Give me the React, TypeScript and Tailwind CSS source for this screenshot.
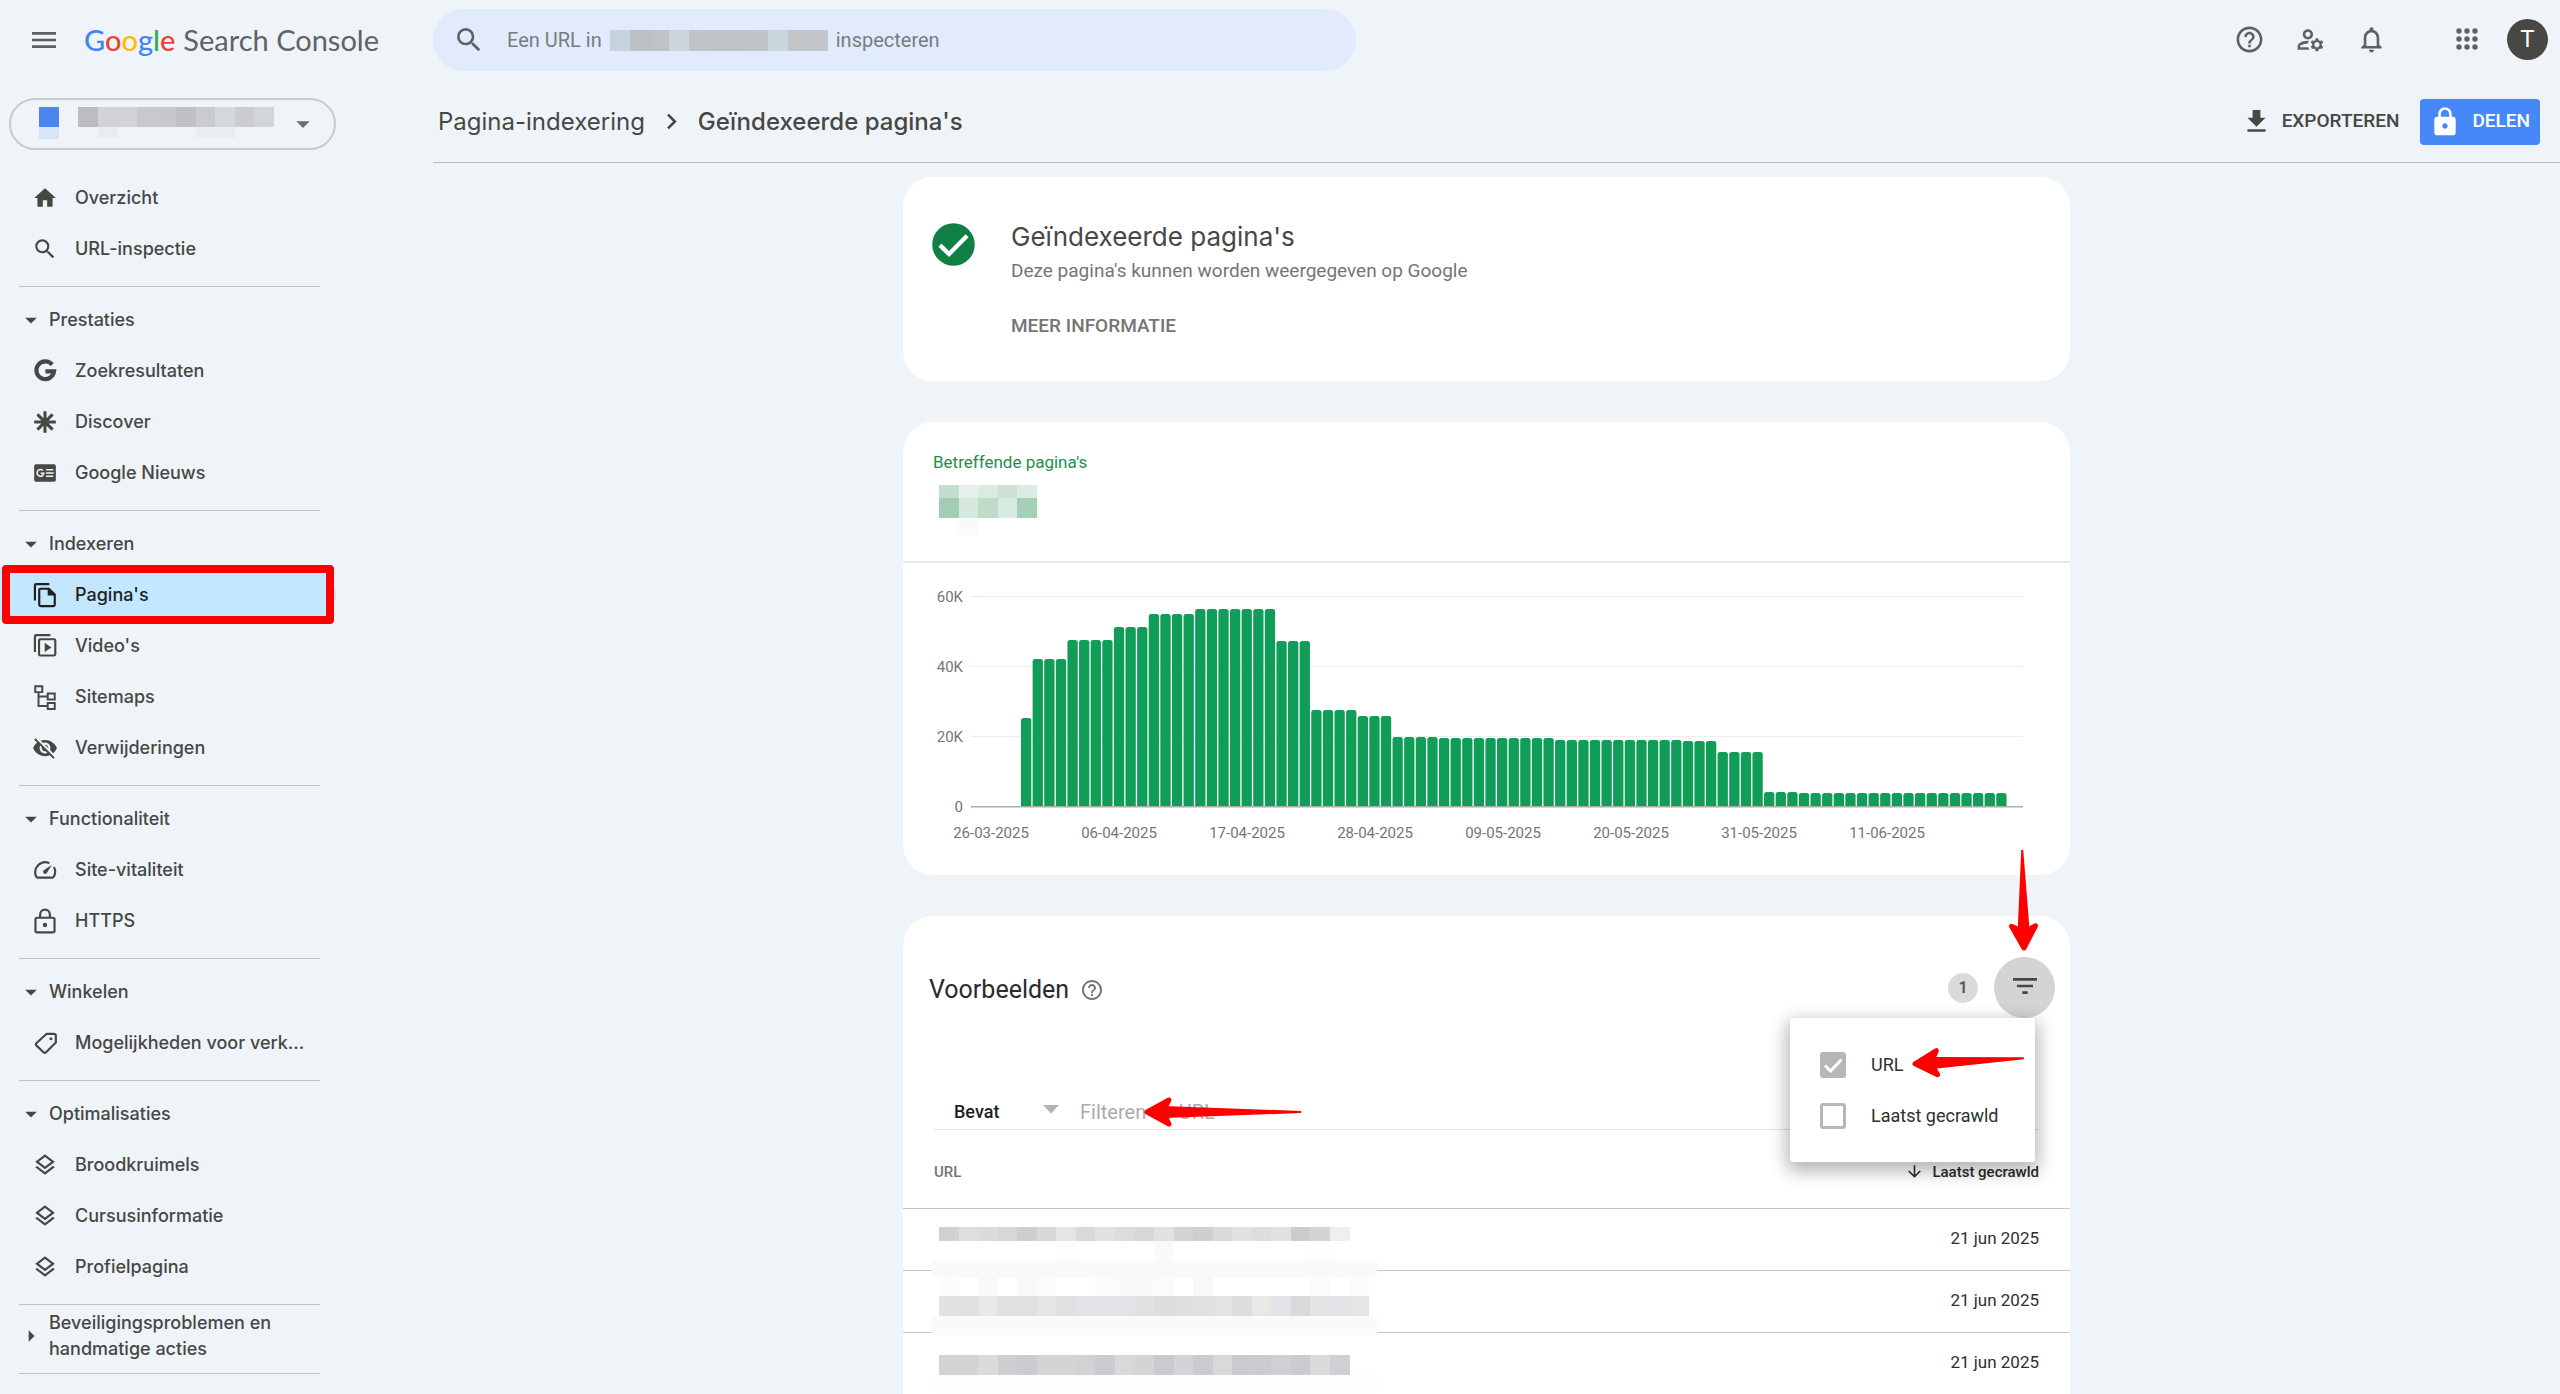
import React from "react";
import type { ReactNode } from "react";
import {
  MdArrowDownward,
  MdArrowDropDown,
  MdArrowRight,
  MdChevronRight,
  MdFileDownload,
  MdFilterList,
  MdHelpOutline,
  MdHome,
  MdLock,
  MdMenu,
  MdNotificationsNone,
  MdOutlineLayers,
  MdOutlineManageAccounts,
  MdSearch,
  MdVisibilityOff,
} from "react-icons/md";

/* ---------- icons ---------- */

function Glyph({ children }: { children: ReactNode }) {
  return (
    <svg viewBox="0 0 24 24" className="size-[26px]" fill="none" stroke="currentColor" strokeWidth={2} aria-hidden="true">
      {children}
    </svg>
  );
}

const GIcon = () => (
  <Glyph>
    <path d="M18.6 6.1A8.2 8.2 0 1 0 20.4 12.3H12.4" strokeWidth={3.8} />
  </Glyph>
);
const DiscoverIcon = () => (
  <Glyph>
    <path d="M12 2v20M2 12h20M5 5l14 14M19 5L5 19" strokeWidth={2.8} />
  </Glyph>
);
const NewsIcon = () => (
  <Glyph>
    <rect x="2" y="4" width="20" height="16" rx="1.6" fill="currentColor" stroke="none" />
    <path d="M10 9.7A3.1 3.1 0 1 0 10.9 12.2H8" stroke="#eff4f9" strokeWidth={1.5} />
    <path d="M13 9h6.6M13 12h7M13 15h6.6" stroke="#eff4f9" strokeWidth={1.5} />
  </Glyph>
);
const PagesIcon = () => (
  <Glyph>
    <path d="M2.7 17V3.2Q2.7 2 3.9 2H16" />
    <path d="M8 6.2h7.6l5.4 5.4V21q0 1.3-1.3 1.3H8Q6.7 22.3 6.7 21V7.5Q6.7 6.2 8 6.2Z" />
    <path d="M14.5 6v6.5H21.5Z" fill="currentColor" stroke="none" />
  </Glyph>
);
const VideosIcon = () => (
  <Glyph>
    <path d="M2.7 17.5V3.2Q2.7 2 3.9 2H17" />
    <rect x="6.5" y="5.8" width="15" height="15" rx="1.3" />
    <path d="M11.7 9v8.6L18 13.3Z" fill="currentColor" stroke="none" />
  </Glyph>
);
const SitemapIcon = () => (
  <Glyph>
    <path d="M3 2h6.5v5.5H3zM14.5 8.8H21v5.5h-6.500zM14.5 17.500H21V23h-6.500zM6 7.500v12.800h8.500M6 11.600h8.500" strokeWidth={1.8} />
  </Glyph>
);
const SpeedIcon = () => (
  <Glyph>
    <path d="M20.2 9.2A9 9 0 0 1 20 18.2Q19.600 19 18.800 19H5.200Q4.400 19 4 18.200A9.200 9.200 0 0 1 16 5.700" />
    <path d="M18.5 7.2L13.5 15A1.9 1.9 0 0 1 10.8 12.3Z" fill="currentColor" stroke="none" />
  </Glyph>
);
const LockOutlineIcon = () => (
  <Glyph>
    <rect x="3.2" y="9" width="17.6" height="13.5" rx="1.5" />
    <path d="M7.5 9V6a4.500 4.500 0 0 1 9 0v3" />
    <circle cx="12" cy="15.6" r="2" fill="currentColor" stroke="none" />
  </Glyph>
);
const TagIcon = () => (
  <Glyph>
    <path d="M13.5 3.500H20q2 0 2 2v6L12.800 20.700q-1 .9-2 0L4 14.200q-1-1 0-2Z" />
    <circle cx="17.5" cy="8" r="1.4" fill="currentColor" stroke="none" />
  </Glyph>
);
const LayersIcon = () => <MdOutlineLayers className="size-[28px]" />;

const AppsIcon = () => (
  <svg viewBox="0 0 24 24" className="size-[24px]" fill="currentColor" aria-hidden="true">
    {[4, 12, 20].map((y) => [4, 12, 20].map((x) => <circle key={`${x}-${y}`} cx={x} cy={y} r="2.7" />))}
  </svg>
);

/* Red pointer with its tip at (0,0) and its tail to the right. */
function Pointer({ length }: { length: number }) {
  return (
    <g fill="#ff0000">
      <path d="M3 0L25 -12L21 -4V4L25 12Z" stroke="#ff0000" strokeWidth={5} strokeLinejoin="round" />
      <path d={`M20 -6L${length} -1V1L20 6Z`} />
    </g>
  );
}

/* Blocks that hide private values. */
function Blocks({ x = 0, y = 0, w, h, colors }: { x?: number; y?: number; w: number; h: number; colors: string[] }) {
  return (
    <g shapeRendering="crispEdges">
      {colors.map((c, i) => (c ? <rect key={i} x={x + i * w} y={y} width={w} height={h} fill={c} /> : null))}
    </g>
  );
}

/* ---------- sidebar ---------- */

type Item = { label: string; icon: ReactNode; active?: boolean };
type Section = { title?: string; items: Item[] };

const sections: Section[] = [
  {
    items: [
      { label: "Overzicht", icon: <MdHome className="size-[26px]" /> },
      { label: "URL-inspectie", icon: <MdSearch className="size-[28px]" /> },
    ],
  },
  {
    title: "Prestaties",
    items: [
      { label: "Zoekresultaten", icon: <GIcon /> },
      { label: "Discover", icon: <DiscoverIcon /> },
      { label: "Google Nieuws", icon: <NewsIcon /> },
    ],
  },
  {
    title: "Indexeren",
    items: [
      { label: "Pagina's", icon: <PagesIcon />, active: true },
      { label: "Video's", icon: <VideosIcon /> },
      { label: "Sitemaps", icon: <SitemapIcon /> },
      { label: "Verwijderingen", icon: <MdVisibilityOff className="size-[26px]" /> },
    ],
  },
  {
    title: "Functionaliteit",
    items: [
      { label: "Site-vitaliteit", icon: <SpeedIcon /> },
      { label: "HTTPS", icon: <LockOutlineIcon /> },
    ],
  },
  { title: "Winkelen", items: [{ label: "Mogelijkheden voor verk...", icon: <TagIcon /> }] },
  {
    title: "Optimalisaties",
    items: [
      { label: "Broodkruimels", icon: <LayersIcon /> },
      { label: "Cursusinformatie", icon: <LayersIcon /> },
      { label: "Profielpagina", icon: <LayersIcon /> },
    ],
  },
];

function Logo() {
  return (
    <a href="#" className="flex items-baseline gap-2 font-[Lato,sans-serif] text-[29px] leading-9 text-[#5f6368]">
      <span className="font-medium">
        <span className="text-[#4285f4]">G</span>
        <span className="text-[#ea4335]">o</span>
        <span className="text-[#fbbc04]">o</span>
        <span className="text-[#4285f4]">g</span>
        <span className="text-[#34a853]">l</span>
        <span className="text-[#ea4335]">e</span>
      </span>
      <span>Search Console</span>
    </a>
  );
}

function Sidebar() {
  return (
    <aside className="w-[433px] shrink-0 pt-[9px] text-[#474744]">
      <div className="flex h-[62px] items-center gap-[24px] pl-[28px] text-[#5f6060]">
        <button type="button" aria-label="Menu">
          <MdMenu className="size-[32px]" />
        </button>
        <Logo />
      </div>

      <button
        type="button"
        aria-label="Property selecteren"
        className="mt-[27px] ml-[9px] flex h-[52px] w-[327px] items-center rounded-full border-2 border-[#c9cccd] pl-[20px]"
      >
        <svg width="256" height="36" aria-hidden="true">
          <Blocks x={0} y={1} w={8} h={20} colors={["#f1f5f8"]} />
          <Blocks x={8} y={1} w={20} h={20} colors={["#4a86f0"]} />
          <Blocks x={8} y={21} w={20} h={12} colors={["#d8e5f8"]} />
          <Blocks
            x={47}
            y={1}
            w={19.6}
            h={20}
            colors={["#bcbdbe", "#d1d3d4", "#d0d4d6", "#c8c9cb", "#c6c8ca", "#bfc1c3", "#c9cbcf", "#d4d9db", "#cccdd1", "#d3d6d8"]}
          />
          <Blocks x={67} y={21} w={19.6} h={11} colors={["#e9edf2", "", "", "", "", "#ebeff3", "#e9edf2"]} />
        </svg>
        <MdArrowDropDown className="size-[32px] text-[#6a6c6c]" />
      </button>

      <nav className="mt-[22px] font-[Inter,sans-serif] text-[18px] font-medium">
        {sections.map((s, i) => (
          <section key={i}>
            {s.title && (
              <button type="button" className="mt-[7px] flex h-[51px] w-full items-center pl-[17px]">
                <MdArrowDropDown className="size-[28px]" />
                <span className="ml-1">{s.title}</span>
              </button>
            )}
            <ul className="pb-3">
              {s.items.map((it) => (
                <li key={it.label} className="relative w-[336px]">
                  <a
                    href="#"
                    className={
                      it.active
                        ? "flex h-[51px] items-center rounded-r-full bg-[#c2e7ff] pl-8 text-[#1f1f1f]"
                        : "flex h-[51px] items-center pl-8"
                    }
                  >
                    <span className="flex w-[26px] shrink-0 justify-center">{it.icon}</span>
                    <span className="ml-[17px] whitespace-nowrap">{it.label}</span>
                  </a>
                  {it.active && (
                    <span className="pointer-events-none absolute -top-1 -bottom-1 left-0.5 right-0.5 rounded-[4px] border-8 border-[#ff0000]" />
                  )}
                </li>
              ))}
            </ul>
            <hr className="ml-[19px] w-[301px] border-[#c0c3c5]" />
          </section>
        ))}
        <button type="button" className="flex items-center pt-[5px] pb-[11px] pl-[17px] text-left leading-[26px]">
          <MdArrowRight className="size-[28px]" />
          <span className="ml-1 w-[240px]">Beveiligingsproblemen en handmatige acties</span>
        </button>
        <hr className="ml-[19px] w-[301px] border-[#c0c3c5]" />
      </nav>
    </aside>
  );
}

/* ---------- top bars ---------- */

function TopBar() {
  return (
    <header className="flex items-start justify-between pt-[9px] pr-0.5">
      <label className="relative flex h-[62px] max-w-[923px] flex-1 items-center rounded-full bg-[#e1ebfd] pl-[20px] text-[20px] text-[#7a7c7c]">
        <MdSearch className="size-[32px] text-[#5f6060]" />
        <span className="ml-[22px]">Een URL in</span>
        <svg width="218" height="21" className="mx-2" aria-hidden="true">
          <Blocks
            w={19.8}
            h={21}
            colors={["#c6d2dc", "#bdc0c3", "#bfc3c6", "#cad5de", "#c0c4c8", "#bfc3c5", "#bfc3c6", "#c1c4c7", "#cad6dd", "#c2c5c8", "#c3c6c8"]}
          />
        </svg>
        <span>inspecteren</span>
        <input type="text" aria-label="URL inspecteren" className="absolute inset-0 rounded-full bg-transparent pl-[74px] outline-none" />
      </label>
      <div className="flex h-[60px] items-center text-[#5f6060]">
        <button type="button" aria-label="Help" className="flex w-[61px] justify-center">
          <MdHelpOutline className="size-[31px]" />
        </button>
        <button type="button" aria-label="Gebruikersinstellingen" className="flex w-[61px] justify-center">
          <MdOutlineManageAccounts className="size-[31px]" />
        </button>
        <button type="button" aria-label="Meldingen" className="flex w-[61px] justify-center">
          <MdNotificationsNone className="size-[31px]" />
        </button>
        <button type="button" aria-label="Google-apps" className="ml-[34px] flex w-[61px] justify-center">
          <AppsIcon />
        </button>
        <button type="button" aria-label="Account" className="flex w-[61px] justify-center">
          <span className="flex size-[41px] items-center justify-center rounded-full bg-[#474744] text-[24px] text-white">T</span>
        </button>
      </div>
    </header>
  );
}

function TitleBar() {
  return (
    <div className="flex h-[92px] items-center justify-between border-b border-[#b9bcbe] pt-2.5 pr-5 pl-[5px]">
      <nav className="flex items-center font-[Inter,sans-serif] text-[24px] text-[#474744]">
        <a href="#">Pagina-indexering</a>
        <MdChevronRight className="mx-[11px] size-[31px]" />
        <span className="font-medium">Geïndexeerde pagina's</span>
      </nav>
      <div className="flex items-center gap-[21px] text-[19px] font-medium">
        <button type="button" className="flex items-center gap-[10px] text-[#474744]">
          <MdFileDownload className="size-[31px]" />
          EXPORTEREN
        </button>
        <button type="button" className="flex h-[46px] items-center gap-[11px] rounded-[4px] bg-[#4688f7] pr-[10px] pl-[9px] text-white">
          <MdLock className="size-[32px]" />
          DELEN
        </button>
      </div>
    </div>
  );
}

/* ---------- cards ---------- */

function StatusCard() {
  return (
    <section className="flex gap-8 rounded-[30px] bg-white pt-[42px] pb-[41px] pl-[25px]">
      <svg viewBox="0 0 24 24" className="size-[51px] shrink-0" aria-hidden="true">
        <circle cx="12" cy="12" r="10" fill="#118044" />
        <path d="M5.6 12.3l4.300 4.200 8.500-8.600" fill="none" stroke="#fff" strokeWidth={2} />
      </svg>
      <div>
        <h1 className="font-[Inter,sans-serif] text-[26px] leading-[36px] text-[#474744]">Geïndexeerde pagina's</h1>
        <p className="mt-0.5 text-[19px] leading-7 text-[#757575]">Deze pagina's kunnen worden weergegeven op Google</p>
        <a href="#" className="mt-[27px] block text-[19px] leading-7 font-medium text-[#757575]">
          MEER INFORMATIE
        </a>
      </div>
    </section>
  );
}

/* Bar heights in pixels, as runs of [number of days, height]. */
const runs: [number, number][] = [
  [1, 88], [3, 147], [4, 166], [3, 179], [4, 192], [7, 197], [3, 165], [4, 96], [3, 90],
  [4, 69], [10, 68], [11, 66], [3, 65], [4, 54], [3, 14], [18, 13],
];
const bars = runs.flatMap(([n, h]) => Array.from({ length: n }, () => h));
const days = ["26-03-2025", "06-04-2025", "17-04-2025", "28-04-2025", "09-05-2025", "20-05-2025", "31-05-2025", "11-06-2025"];

function ChartCard() {
  return (
    <section className="rounded-[30px] bg-white">
      <div className="h-[141px] border-b-2 border-[#e6e9e9] pt-[28px] pl-[30px]">
        <h2 className="text-[17px] leading-6 text-[#1e8e4e]">Betreffende pagina's</h2>
        <svg width="110" height="50" className="mt-[11px] ml-[6px]" aria-hidden="true">
          <Blocks w={19.6} h={13} colors={["#c3dece", "#e8f0ec", "#dbebe1", "#cbe2d5", "#dcece3"]} />
          <Blocks y={13} w={19.6} h={20} colors={["#a2ccb3", "#d5e9dc", "#bfdccb", "#d8ebe0", "#a6cfb8"]} />
          <Blocks y={33} w={19.6} h={17} colors={["", "#fafafa"]} />
        </svg>
      </div>
      <svg viewBox="0 0 1167 312" className="block w-full" role="img" aria-label="Betreffende pagina's per dag">
        {[
          [33, "60K"],
          [103, "40K"],
          [173, "20K"],
          [243, "0"],
        ].map(([y, t]) => (
          <g key={t}>
            <rect x="68" y={y} width="1052" height={t === "0" ? 1.5 : 1} fill={t === "0" ? "#a9acac" : "#eceeee"} />
            <text x="60" y={Number(y) + 6} textAnchor="end" fontSize="15" fill="#757575">
              {t}
            </text>
          </g>
        ))}
        {bars.map((h, i) => {
          const x = 118 + i * 11.61;
          return (
            <path
              key={i}
              d={`M${x} 243V${245.5 - h}q0 -2.5 2.5 -2.5h5.3q2.5 0 2.5 2.5V243Z`}
              fill="#0f9d58"
            />
          );
        })}
        {days.map((d, i) => (
          <text key={d} x={88 + i * 128} y="275" textAnchor="middle" fontSize="15" fill="#757575">
            {d}
          </text>
        ))}
      </svg>
    </section>
  );
}

function FilterOption({ label, checked }: { label: string; checked: boolean }) {
  return (
    <label className="flex h-[51px] items-center gap-[25px] pl-[30px] text-[18px] text-[#2e3030]">
      <span className="relative size-[26px]">
        <input
          type="checkbox"
          defaultChecked={checked}
          className="block size-[26px] appearance-none rounded-[3px] border-[3px] border-[#b4b6b8] checked:bg-[#b4b6b8]"
        />
        {checked && (
          <svg viewBox="0 0 26 26" className="pointer-events-none absolute inset-0" aria-hidden="true">
            <path d="M5 13.5l5.500 5.500L21.500 7.500" fill="none" stroke="#fff" strokeWidth={3} />
          </svg>
        )}
      </span>
      {label}
    </label>
  );
}

function Redactions() {
  return (
    <svg width="446" height="168" className="absolute top-[97px] left-[29px]" aria-hidden="true">
      <Blocks x={0} y={34} w={445} h={16} colors={["#f8f9f9"]} />
      <Blocks x={0} y={50} w={445} h={19} colors={["#ffffff"]} />
      <Blocks x={0} y={89} w={445} h={19} colors={["#f9fafa"]} />
      <Blocks x={0} y={148} w={445} h={18} colors={["#fdfdfd"]} />
      <Blocks
        x={7}
        y={0}
        w={19.55}
        h={14}
        colors={[
          "#d0d1d4", "#dcdfdd", "#dadcda", "#d6d8d6", "#cdced2", "#d7d9d7", "#e4e5e8", "#d8dad8", "#e0e1e3", "#dbdddb", "#d6d7d8",
          "#e0e2e1", "#d2d3d5", "#cecfd2", "#d9dad9", "#e0e2e1", "#dcdedc", "#e0e1e4", "#cbccd0", "#d3d4d6", "#eeeff2",
        ]}
      />
      <Blocks
        x={7}
        y={14}
        w={19.55}
        h={20}
        colors={["", "", "", "", "", "", "#fdfdfd", "", "", "", "", "#f9fafa", "", "", "", "", "", "", "", "#fdfdfd"]}
      />
      <Blocks
        x={7}
        y={50}
        w={19.55}
        h={19}
        colors={[
          "#fcfcfc", "", "#f9f9f9", "", "#f9f9f9", "#fcfcfc", "", "", "#fcfcfc", "#fafafa", "#fafafa", "#fbfbfb", "", "#f7f8f8", "",
          "", "", "", "", "#fcfcfc", "", "#fcfcfc",
        ]}
      />
      <Blocks
        x={7}
        y={69}
        w={19.55}
        h={20}
        colors={[
          "#e1e2e4", "#e0e1e2", "#e8eae8", "#e0e1e2", "#dfe0e1", "#e5e6e7", "#e0e1e3", "#e2e3e6", "#e2e3e6", "#e2e3e6", "#dfe0e2",
          "#dcdedd", "#dddfde", "#e0e1e3", "#e2e3e5", "#dcdddd", "#e7e9e7", "#e2e3e6", "#d9dbd9", "#e2e3e5", "#e2e3e6", "#e4e6e5",
        ]}
      />
      <Blocks
        x={7}
        y={128}
        w={19.55}
        h={20}
        colors={[
          "#d2d3d5", "#d2d3d4", "#dadcda", "#cecfd2", "#cbccd0", "#d3d4d6", "#d3d4d6", "#d1d2d4", "#cbccd1", "#d8dad9", "#d3d4d6",
          "#cacbd0", "#d3d4d7", "#cbccd1", "#d8dad8", "#cacbd0", "#cbccd0", "#cfd0d2", "#cbccd0", "#d9dbd9", "#cfd0d3",
        ]}
      />
    </svg>
  );
}

function ExamplesCard() {
  return (
    <section className="rounded-t-[30px] bg-white pt-[41px]">
      <div className="flex h-[61px] items-center pr-[15px] pl-[26px]">
        <div className="flex items-center pt-1">
          <h2 className="text-[25px] text-[#2a2b2b]">Voorbeelden</h2>
          <button type="button" aria-label="Uitleg" className="ml-[11px] text-[#757575]">
            <MdHelpOutline className="size-[24px]" />
          </button>
        </div>
        <span className="mr-[16px] ml-auto flex size-[30px] items-center justify-center rounded-full bg-[#d9dadb] text-[16px] font-bold text-[#5b5d5d]">
          1
        </span>
        <div className="relative z-10">
          <button type="button" aria-label="Filter" className="flex size-[61px] items-center justify-center rounded-full bg-[#d2d4d5] pb-1 text-[#474744]">
            <MdFilterList className="size-[32px]" />
          </button>
          <svg width="40" height="106" className="pointer-events-none absolute -top-[108px] left-[10px] max-w-none" aria-hidden="true">
            <g transform="translate(20 102) rotate(-91)">
              <Pointer length={101} />
            </g>
          </svg>
          <div className="absolute top-full right-5 w-[245px] rounded-[3px] bg-white py-[21px] shadow-[0_6px_18px_3px_rgba(0,0,0,0.3)]">
            <FilterOption label="URL" checked />
            <FilterOption label="Laatst gecrawld" checked={false} />
            <svg width="120" height="36" className="pointer-events-none absolute top-[26px] left-[120px]" aria-hidden="true">
              <g transform="translate(2 20) rotate(-3)">
                <Pointer length={112} />
              </g>
            </svg>
          </div>
        </div>
      </div>

      <div className="relative mr-[31px] ml-[31px] mt-[76px] flex h-[36px] items-center border-b border-[#dfe1e2] pl-5">
        <label className="relative">
          <select aria-label="Filtertype" className="w-[110px] appearance-none text-[18px] font-medium text-[#1f1f1f] outline-none">
            <option>Bevat</option>
          </select>
          <svg width="16" height="9" className="pointer-events-none absolute top-[7px] right-[5px]" aria-hidden="true">
            <path d="M0 0H16L8 8.5Z" fill="#b0b2b3" />
          </svg>
        </label>
        <input
          type="text"
          aria-label="Filteren op URL"
          placeholder="Filteren op URL"
          className="ml-4 flex-1 text-[20px] outline-none placeholder:text-[#a9abac]"
        />
        <svg width="162" height="36" className="pointer-events-none absolute top-0 left-[208px]" aria-hidden="true">
          <g transform="translate(2 18)">
            <Pointer length={157} />
          </g>
        </svg>
      </div>

      <div className="relative">
        <table className="w-full border-collapse">
          <thead>
            <tr className="h-[78px] border-b border-[#c4c7c8] text-[15px]">
              <th scope="col" className="pb-0 pl-[31px] pt-[6px] text-left font-medium text-[#757575]">
                URL
              </th>
              <th scope="col" className="pt-[6px] pr-[31px] font-medium text-[#2a2b2b]">
                <span className="flex items-center justify-end gap-[8px]">
                  <MdArrowDownward className="size-[19px]" />
                  Laatst gecrawld
                </span>
              </th>
            </tr>
          </thead>
          <tbody>
            {[1, 2, 3].map((n) => (
              <tr key={n} className="h-[62px] border-b border-[#c4c7c8] text-[17px] text-[#2e3030]">
                <td />
                <td className="pr-[31px] text-right">21 jun 2025</td>
              </tr>
            ))}
          </tbody>
        </table>
        <Redactions />
      </div>
    </section>
  );
}

export default function App() {
  return (
    <div className="flex h-screen overflow-hidden bg-[#eff4f9] font-[Roboto,sans-serif]">
      <Sidebar />
      <div className="flex min-w-0 flex-1 flex-col">
        <TopBar />
        <TitleBar />
        <main className="min-h-0 flex-1 overflow-hidden pt-[14px] pr-5">
          <div className="mx-auto flex max-w-[1167px] flex-col gap-[41px]">
            <StatusCard />
            <ChartCard />
            <ExamplesCard />
          </div>
        </main>
      </div>
    </div>
  );
}
